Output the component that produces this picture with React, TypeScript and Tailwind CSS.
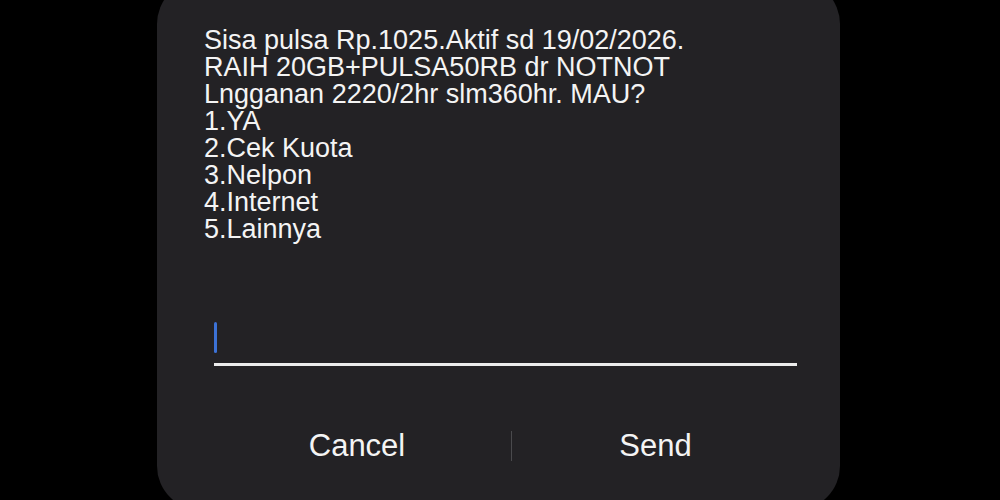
import React from 'react';

const lines = [
  'Sisa pulsa Rp.1025.Aktif sd 19/02/2026.',
  'RAIH 20GB+PULSA50RB dr NOTNOT',
  'Lngganan 2220/2hr slm360hr. MAU?',
  '1.YA',
  '2.Cek Kuota',
  '3.Nelpon',
  '4.Internet',
  '5.Lainnya',
];

const UssdDialog: React.FC = () => {
  return (
    <div className="ml-[157px] mt-[-20px] h-[530px] w-[683px] rounded-[44px] bg-[#232225] pt-[47px]">
      {/* message body */}
      <div className="pl-[47px] text-[27px] leading-[27px] text-[#f4f4f4]">
        {lines.map(line => (
          <div key={line} className="whitespace-pre">{line}</div>
        ))}
      </div>

      {/* reply input */}
      <div className="ml-[57px] mt-[79px] w-[583px] border-b-[3px] border-[#ececec] pb-[10px]">
        <div className="h-[31px] w-[3px] rounded-full bg-[#3c72d6]" />
      </div>

      {/* actions */}
      <div className="ml-[46px] mt-[55px] flex h-[50px] items-center text-[31px] text-[#f4f4f4]">
        <button className="flex h-full w-[308px] items-center justify-center">Cancel</button>
        <div className="h-[30px] w-px bg-[#4a4a4d]" />
        <button className="flex h-full w-[287px] items-center justify-center">Send</button>
      </div>
    </div>
  );
};

export default function App() {
  return (
    <div className="h-[500px] w-[1000px] overflow-hidden bg-black" style={{ fontFamily: '"Liberation Sans", Arial, sans-serif' }}>
      <UssdDialog />
    </div>
  );
}
